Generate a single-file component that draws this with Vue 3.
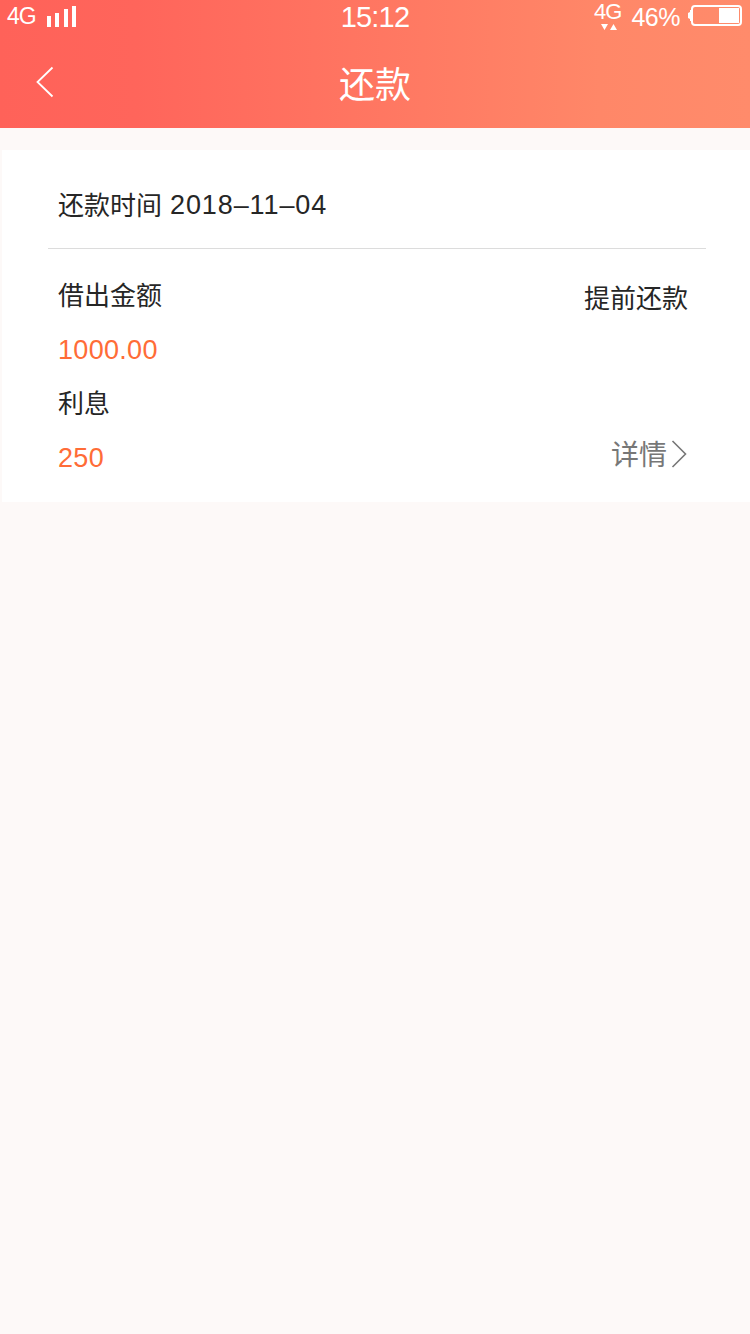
<script setup>
const bars = [11, 14, 18, 21]
const amounts = [
  { label: '借出金额', value: '1000.00' },
  { label: '利息', value: '250' },
]
</script>

<template>
  <div class="page">
    <header class="top">
      <div class="status">
        <div class="side">
          <span class="net">4G</span>
          <div class="signal">
            <i v-for="h in bars" :key="h" :style="{ height: h + 'px' }"></i>
          </div>
        </div>
        <span class="clock">15:12</span>
        <div class="side right">
          <div class="data">
            <span class="data-label">4G</span>
            <svg width="16" height="7" viewBox="0 0 16 7" fill="#fff">
              <path d="M0 0H7L3.500 6ZM9 6H16L12.500 0Z" />
            </svg>
          </div>
          <span class="percent">46%</span>
          <svg class="battery" width="54" height="21" viewBox="0 0 54 21">
            <path d="M4 5H2V7L0 8V13L2 14V16H4Z" fill="#fff" />
            <rect x="4" y="1" width="49" height="19" rx="3" fill="none" stroke="#fff" stroke-width="2" />
            <rect x="31" y="3" width="20" height="15" fill="#fff" />
          </svg>
        </div>
      </div>
      <div class="nav">
        <svg class="back" width="20" height="32" viewBox="0 0 20 32" fill="none" stroke="#fff" stroke-width="1.800">
          <path d="M17.500 1.500L2.500 16L17.500 30.500" />
        </svg>
        <h1>还款</h1>
      </div>
    </header>

    <main class="card">
      <div class="date"><span>还款时间</span><span class="num">2018–11–04</span></div>
      <div class="body">
        <dl>
          <template v-for="a in amounts" :key="a.label">
            <dt>{{ a.label }}</dt>
            <dd>{{ a.value }}</dd>
          </template>
        </dl>
        <div class="actions">
          <span class="early">提前还款</span>
          <span class="detail">
            详情
            <svg width="17" height="28" viewBox="0 0 17 28" fill="none" stroke="#777" stroke-width="1.600">
              <path d="M1.500 1L14.500 14L1.500 27" />
            </svg>
          </span>
        </div>
      </div>
    </main>
  </div>
</template>

<style>
body {
  background: #fdf9f8;
}
</style>

<style scoped>
.page {
  min-height: 1334px;
  background: #fdf9f8;
  font-family: "Liberation Sans", "Noto Sans CJK SC", sans-serif;
  color: #262626;
}
.top {
  height: 128px;
  background: linear-gradient(90deg, #ff6259, #ff655b 18%, #ff8768 80%, #ff8b6b);
  color: #fff;
}
.status {
  display: grid;
  grid-template-columns: 1fr auto 1fr;
  height: 34px;
}
.side {
  display: flex;
  align-items: flex-start;
}
.right {
  justify-content: flex-end;
  padding-right: 8px;
}
.net {
  margin: 4px 0 0 7px;
  width: 40px;
  font-size: 23px;
  line-height: 24px;
  letter-spacing: -1px;
}
.signal {
  display: flex;
  align-items: flex-end;
  gap: 4.300px;
  height: 27px;
}
.signal i {
  width: 4px;
  background: #fff;
}
.clock {
  font-size: 29px;
  line-height: 34px;
  letter-spacing: -0.800px;
}
.data {
  display: flex;
  flex-direction: column;
  align-items: center;
  margin-right: 10px;
}
.data svg {
  margin-left: 2px;
}
.data-label {
  font-size: 22px;
  line-height: 24px;
  letter-spacing: -1px;
}
.percent {
  margin-right: 8px;
  font-size: 25px;
  line-height: 34px;
  letter-spacing: -0.500px;
}
.battery {
  margin-top: 5px;
}
.nav {
  display: grid;
  grid-template-columns: 1fr auto 1fr;
  align-items: start;
}
.back {
  margin: 32px 0 0 35px;
}
h1 {
  margin: 25px 0 0;
  font-size: 36px;
  line-height: 54px;
  font-weight: 400;
}
.card {
  box-sizing: border-box;
  height: 352px;
  margin: 22px 0 0 2px;
  padding: 0 44px 0 46px;
  background: #fff;
}
.date {
  display: flex;
  gap: 8px;
  box-sizing: border-box;
  height: 99px;
  padding: 36px 0 0 10px;
  border-bottom: 1px solid #dcdcdc;
  font-size: 26px;
  line-height: 40px;
}
.num {
  margin-top: -1px;
  font-size: 27px;
  letter-spacing: 0.900px;
}
.body {
  display: flex;
  justify-content: space-between;
  padding: 0 18px 0 10px;
}
dl {
  margin: 20px 0 0;
  font-size: 26px;
}
dt {
  height: 54px;
  line-height: 54px;
}
dd {
  margin: 0;
  height: 54px;
  line-height: 54px;
  font-size: 27px;
  letter-spacing: 0.300px;
  color: #ff6c37;
}
.actions {
  display: flex;
  flex-direction: column;
  align-items: flex-end;
  justify-content: space-between;
  padding-top: 30px;
  height: 197px;
}
.early {
  font-size: 26px;
  line-height: 40px;
}
.detail {
  display: flex;
  align-items: center;
  gap: 4px;
  font-size: 28px;
  line-height: 40px;
  color: #777;
}
.detail svg {
  margin-bottom: 4px;
}
</style>
